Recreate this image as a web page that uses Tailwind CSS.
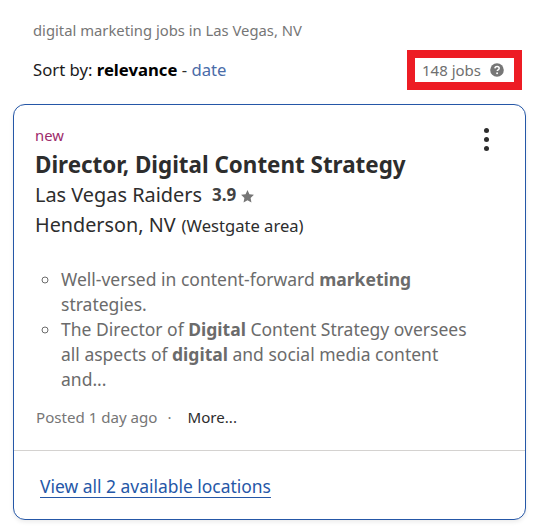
<!DOCTYPE html>
<html>
<head>
  <meta charset="UTF-8">
  <meta name="viewport" content="width=device-width, initial-scale=1.0">
  <script src="https://cdn.jsdelivr.net/npm/@tailwindcss/browser@4"></script>
</head>
<body class="bg-white font-['Noto_Sans',sans-serif] text-[#2d2d2d] overflow-hidden">
<div class="w-[540px] h-[532px] pt-[20px]">
  <p class="pl-[33px] text-[14.8px] leading-5 text-[#767676]">digital marketing jobs in Las Vegas, NV</p>

  <div class="mt-[10px] h-[40px] pl-[33px] pr-[18px] flex items-center justify-between">
    <div class="text-[16.7px] leading-5 text-[#1b1b1b]">Sort by: <b class="font-bold text-black">relevance</b> <span class="text-[#2d2d2d]">-</span> <span class="text-[#4a6ca8]">date</span></div>
    <div class="w-[115px] h-[40px] border-[8px] border-[#ed1c24] flex items-center pl-[7px] bg-white">
      <span class="text-[15px] leading-5 text-[#6f6f6f]">148 jobs</span>
      <svg class="ml-[9px]" width="14" height="14" viewBox="0 0 14 14">
        <circle cx="7" cy="7" r="6.8" fill="#767676"/>
        <path d="M4.9 5.4c.1-1.2 1-1.9 2.2-1.9s2.1.7 2.1 1.8c0 .8-.4 1.2-1.1 1.6-.6.4-.8.6-.8 1.2" fill="none" stroke="#fff" stroke-width="1.5"/>
        <circle cx="7.1" cy="10.2" r=".95" fill="#fff"/>
      </svg>
    </div>
  </div>

  <div class="relative mt-[14px] ml-[13px] w-[513px] h-[416px] rounded-xl border border-[#2557a7] bg-white shadow-[0_2px_4px_rgba(0,0,0,0.08)] overflow-hidden">
    <div class="absolute right-[36px] top-[23px] flex flex-col gap-[4px]">
      <span class="w-[5px] h-[5px] rounded-full bg-[#2d2d2d]"></span>
      <span class="w-[5px] h-[5px] rounded-full bg-[#2d2d2d]"></span>
      <span class="w-[5px] h-[5px] rounded-full bg-[#2d2d2d]"></span>
    </div>

    <div class="pl-[21px] pr-[16px] pt-[20px]">
      <p class="text-[14.8px] leading-5 text-[#9d2b6b]">new</p>
      <h2 class="mt-[5px] text-[22.4px] leading-[30px] font-bold text-[#2d2d2d]">Director, Digital Content Strategy</h2>
      <div class="mt-[1px] h-[28px] flex items-center text-[19.9px]">
        <span>Las Vegas Raiders</span>
        <b class="ml-[10px] text-[17px] font-bold text-[#424242]">3.9</b>
        <svg class="ml-[4px] mt-[2px]" width="15" height="15" viewBox="0 0 14 14"><path d="M7 1l1.8 3.9 4.2.5-3.1 2.9.8 4.2L7 10.4l-3.7 2.1.8-4.2L1 5.4l4.2-.5z" fill="#767676"/></svg>
      </div>
      <div class="mt-[1px] h-[30px] flex items-baseline text-[19.8px] leading-[30px]">
        <span>Henderson, NV</span>
        <span class="ml-[6px] text-[16.6px] text-[#2d2d2d]">(Westgate area)</span>
      </div>
    </div>

    <ul class="mt-[27px] ml-[47px] w-[420px] list-[circle] text-[#6b6b6b] text-[17.5px] leading-[25px]">
      <li>Well-versed in content-forward <b class="font-bold">marketing</b> strategies.</li>
      <li>The Director of <b class="font-bold">Digital</b> Content Strategy oversees all aspects of <b class="font-bold">digital</b> and social media content and...</li>
    </ul>

    <div class="mt-[13px] pl-[22px] flex items-center h-[24px] text-[15.1px]">
      <span class="text-[#767676]">Posted 1 day ago</span>
      <span class="ml-[10px] text-[#767676]">·</span>
      <span class="ml-[16px] text-[#2d2d2d]">More...</span>
    </div>

    <div class="absolute left-0 right-0 bottom-0 h-[69px] border-t border-[#d4d2d0] pl-[26px] pt-[24px]">
      <a class="text-[17.45px] leading-[22px] text-[#2557a7] underline underline-offset-[4px] decoration-1 block w-fit">View all 2 available locations</a>
    </div>
  </div>
</div>
</body>
</html>
